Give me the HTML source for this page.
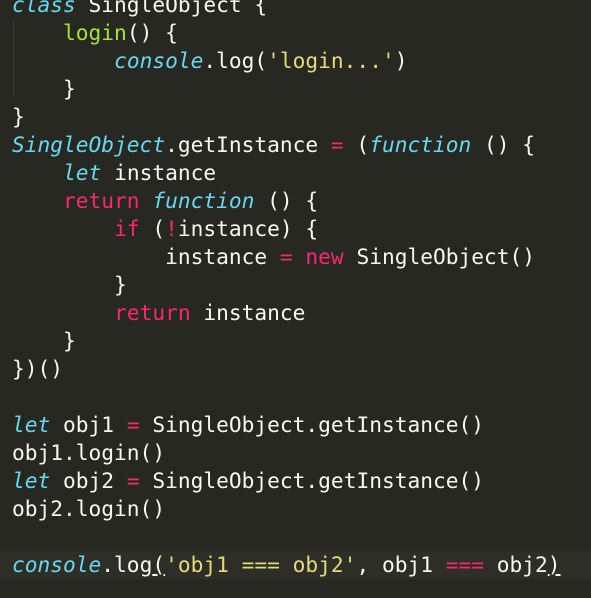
<!DOCTYPE html>
<html><head><meta charset="utf-8"><style>
html,body{margin:0;padding:0;width:591px;height:598px;overflow:hidden;background:#272822;}
pre{position:absolute;left:12px;top:-9px;margin:0;font-family:"DejaVu Sans Mono","Liberation Mono",monospace;font-size:21.2px;line-height:28px;color:#f8f8f2;}
.k{color:#66d9ef;font-style:italic}
.r{color:#f92672}
.g{color:#a6e22e}
.s{color:#e6db74}
.hl{position:absolute;left:0;top:551px;width:591px;height:28px;background:#2d2e28;}
.u{text-decoration:underline}
.guide{position:absolute;left:13px;width:1px;background:#3b3c35}
</style></head><body>
<div class="hl"></div>
<div class="guide" style="top:20px;height:76px"></div>
<pre><span class="k">class</span> SingleObject {
    <span class="g">login</span>() {
        <span class="k">console</span>.log(<span class="s">'login...'</span>)
    }
}
<span class="k">SingleObject</span>.getInstance <span class="r">=</span> (<span class="k">function</span> () {
    <span class="k">let</span> instance
    <span class="r">return</span> <span class="k">function</span> () {
        <span class="r">if</span> (<span class="r">!</span>instance) {
            instance <span class="r">=</span> <span class="r">new</span> SingleObject()
        }
        <span class="r">return</span> instance
    }
})()

<span class="k">let</span> obj1 <span class="r">=</span> SingleObject.getInstance()
obj1.login()
<span class="k">let</span> obj2 <span class="r">=</span> SingleObject.getInstance()
obj2.login()

<span class="k">console</span>.log<span class="u">(</span><span class="s">'obj1 === obj2'</span>, obj1 <span class="r">===</span> obj2<span class="u">)</span></pre>
</body></html>
